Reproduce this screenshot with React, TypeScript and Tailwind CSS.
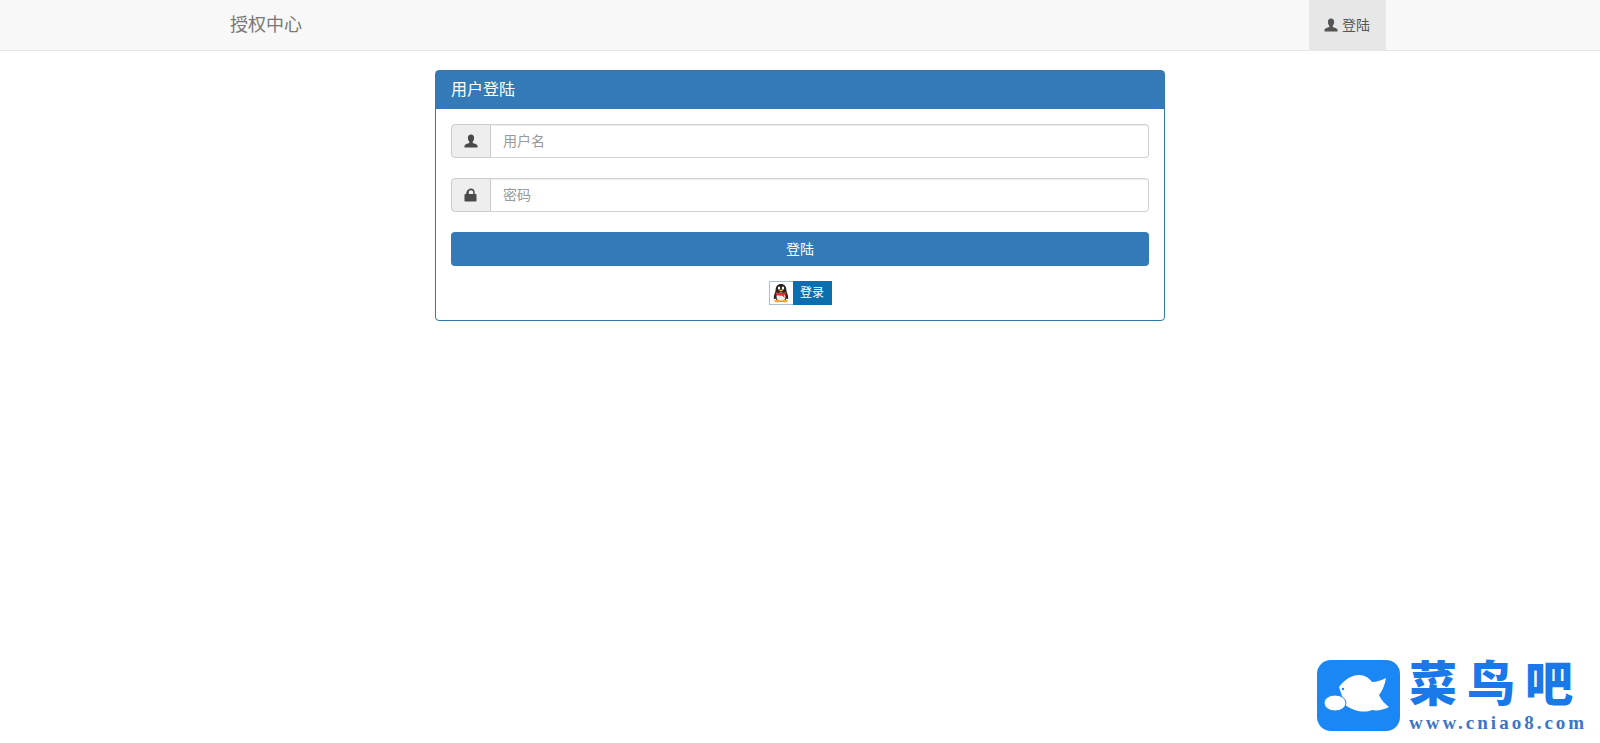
import { ReactNode } from "react";

const font = '"Liberation Sans", "Noto Sans CJK SC", sans-serif';

function UserIcon({ className }: { className?: string }) {
  return (
    <svg viewBox="0 0 14 14" className={className} fill="currentColor">
      <path d="M7 .6c2 0 3.100 1.500 3.100 3.500 0 1.500-.6 2.900-1.400 3.700v1.100c1.700.6 4.300 1.200 4.800 2.500v2H.5v-2c.5-1.300 3.100-1.900 4.800-2.500V7.800C4.500 7 3.900 5.600 3.900 4.100 3.900 2.100 5 .6 7 .6z" />
    </svg>
  );
}

function LockIcon({ className }: { className?: string }) {
  return (
    <svg viewBox="0 0 14 14" className={className} fill="currentColor">
      <path
        fillRule="evenodd"
        d="M7 .5c2.200 0 3.700 1.500 3.700 3.700V6h1c.5 0 .8.300.8.800v6c0 .5-.3.800-.8.800H1.300c-.5 0-.8-.3-.8-.8v-6c0-.5.300-.8.800-.8h1V4.200C3.300 2 4.800.5 7 .5zM4.800 6h4.400V4.300C9.200 3 8.400 2.200 7 2.200S4.800 3 4.800 4.300V6z"
      />
    </svg>
  );
}

function Field({ icon, placeholder }: { icon: ReactNode; placeholder: string }) {
  return (
    <div className="flex h-[34px]">
      <span className="flex w-10 items-center justify-center rounded-l border border-[#cccccc] bg-[#eeeeee] text-[#4a4a4a]">
        {icon}
      </span>
      <input
        placeholder={placeholder}
        className="min-w-0 flex-1 rounded-r border border-l-0 border-[#d2d2d2] bg-white px-3 text-sm text-[#555555] shadow-[inset_0_1px_1px_rgba(0,0,0,0.075)] outline-none placeholder:text-[#999999]"
      />
    </div>
  );
}

function QQButton() {
  return (
    <button className="flex h-6 w-[63px]">
      <span className="flex h-full w-6 items-center justify-center border border-r-0 border-[#a9c0d2] bg-white">
        <svg viewBox="0 0 20 22" className="h-[20px] w-[18px]">
          <path d="M10 1c4 0 6 3 6 7 0 2 2 5 2 8 0 2-1 2-2 1-1 3-3 4-6 4s-5-1-6-4c-1 1-2 1-2-1 0-3 2-6 2-8 0-4 2-7 6-7z" fill="#2b2320" />
          <ellipse cx="10" cy="15.500" rx="5" ry="5" fill="#f4efe6" />
          <path d="M4.500 10c3 1.500 8 1.500 11 0l.5 2.500c-1 .5-2 .8-2.500 1l.5 3-2.500-2.500c-2 .3-5 0-7.500-1z" fill="#d8372a" />
          <ellipse cx="7.800" cy="5.500" rx="1.300" ry="1.800" fill="#ffffff" />
          <ellipse cx="12.200" cy="5.500" rx="1.300" ry="1.800" fill="#ffffff" />
          <path d="M7.500 8 10 7l2.500 1-2.500 1.500z" fill="#f0a92c" />
          <ellipse cx="6" cy="20" rx="3.500" ry="1.500" fill="#f0a92c" />
          <ellipse cx="14" cy="20" rx="3.500" ry="1.500" fill="#f0a92c" />
        </svg>
      </span>
      <span className="flex h-full flex-1 items-center justify-center bg-[#0a6fae] text-xs text-white">
        登录
      </span>
    </button>
  );
}

function Watermark() {
  return (
    <div className="absolute top-[660px] left-[1317px] flex gap-[9px]">
      <div className="h-[71px] w-[83px] rounded-[14px] bg-[#1b87f5]">
        <svg viewBox="0 0 83 71" className="h-[71px] w-[83px]">
          <path
            d="M22 27C28 19 35 15 42 15c6 0 10 3 13 7 5 0 10-2 14-4-1 7-4 13-7 17 2 5 6 9 10 12-6 3-12 4-17 3-7 3-17 2-27-5z"
            fill="#ffffff"
          />
          <ellipse cx="18" cy="43" rx="11" ry="8" fill="#ffffff" stroke="#1b87f5" strokeWidth="1" />
          <circle cx="26" cy="29" r="1.200" fill="#1b87f5" />
        </svg>
      </div>
      <div className="flex flex-col whitespace-nowrap">
        <div className="text-[48px] leading-[50px] font-black tracking-[10px] text-[#1b78e8]">
          菜鸟吧
        </div>
        <div className="mt-[5px] font-['Liberation_Serif',serif] text-[19px] leading-[15px] font-bold tracking-[3px] text-[#3a76c8]">
          www.cniao8.com
        </div>
      </div>
    </div>
  );
}

export default function App() {
  return (
    <div className="relative h-[743px] overflow-hidden bg-white text-sm text-[#333333]" style={{ fontFamily: font }}>
      <nav className="h-[51px] border-b border-[#e7e7e7] bg-[#f8f8f8]">
        <div className="mx-auto flex h-[50px] w-[1170px] items-center justify-between">
          <a className="px-[15px] text-lg text-[#777777]">授权中心</a>
          <a className="-mr-px flex h-[50px] items-center gap-1 bg-[#e7e7e7] pr-4 pl-[15px] text-[#555555]">
            <UserIcon className="h-[14px] w-[14px]" />
            登陆
          </a>
        </div>
      </nav>

      <main className="mx-auto mt-[19px] w-[730px] rounded border border-[#3279a8] bg-white">
        <div className="flex h-[38px] items-center bg-[#337ab7] px-[15px] text-base text-white">用户登陆</div>
        <form className="flex flex-col gap-5 p-[15px]">
          <Field icon={<UserIcon className="h-[14px] w-[14px]" />} placeholder="用户名" />
          <Field icon={<LockIcon className="h-[14px] w-[14px]" />} placeholder="密码" />
          <button className="h-[34px] rounded bg-[#337ab7] text-white">登陆</button>
          <div className="-mt-[5px] flex justify-center">
            <QQButton />
          </div>
        </form>
      </main>

      <Watermark />
    </div>
  );
}
